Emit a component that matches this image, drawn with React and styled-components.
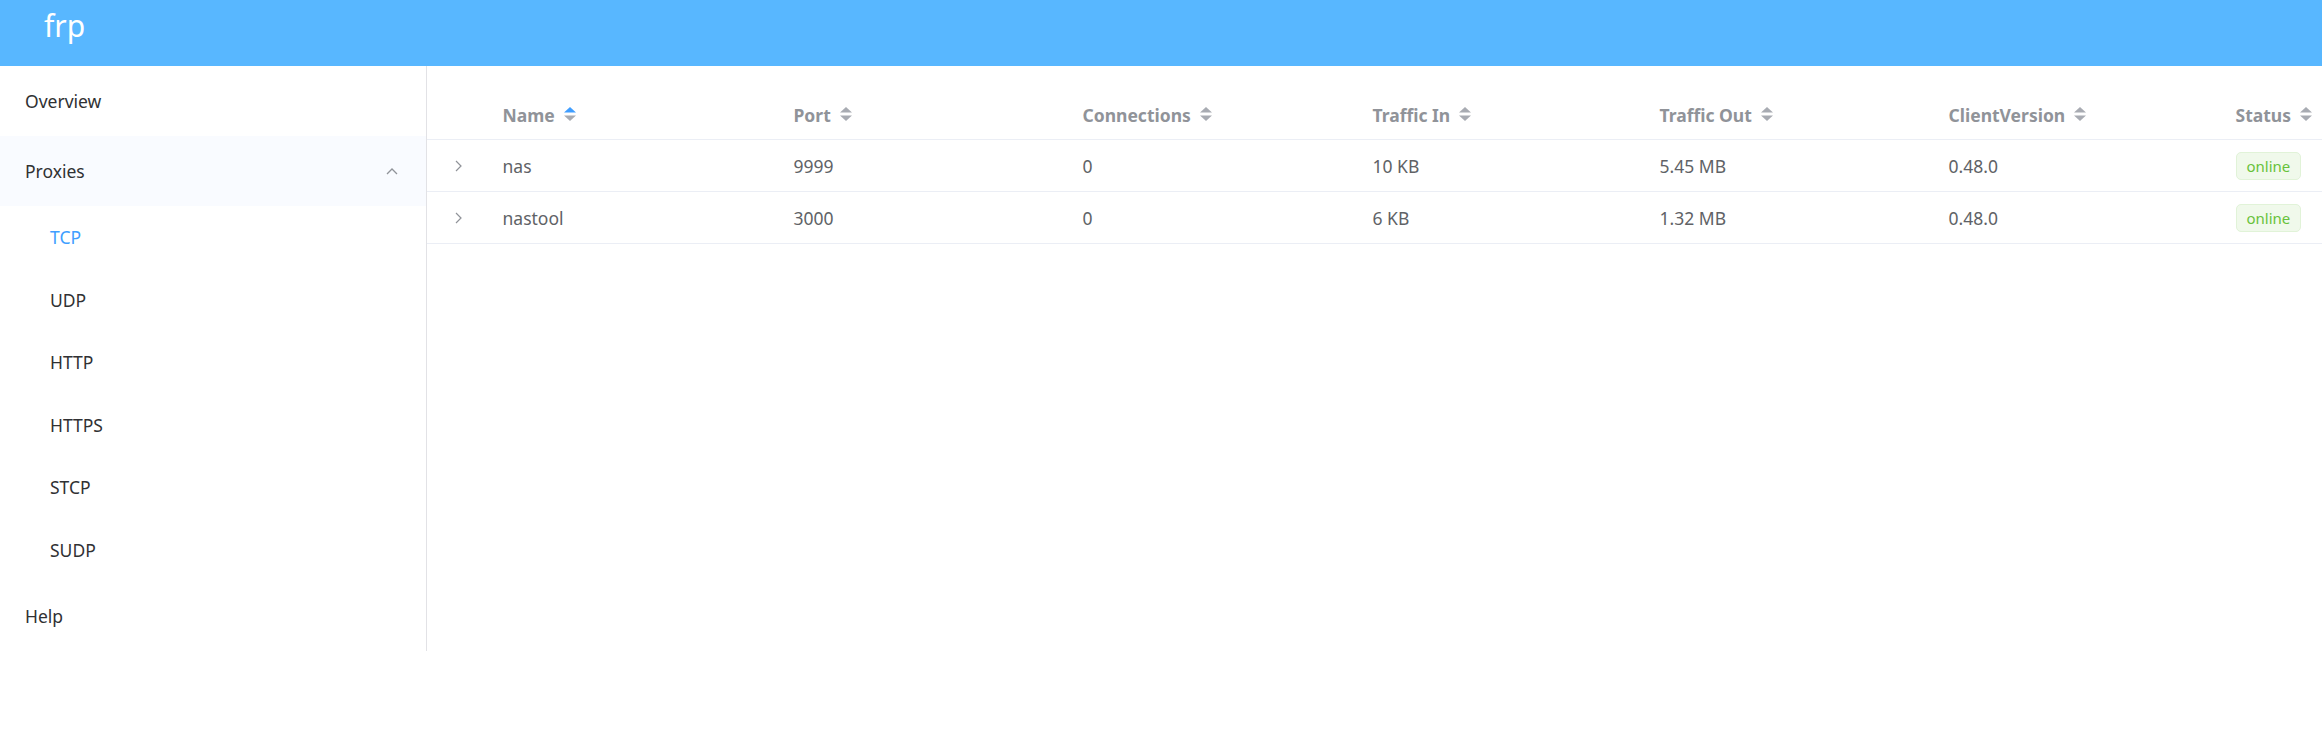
import React from "react";
import styled, { createGlobalStyle } from "styled-components";

const GlobalStyle = createGlobalStyle`
  html, body {
    margin: 0;
    padding: 0;
    background: #fff;
    font-family: "Noto Sans", "Open Sans", "Liberation Sans", sans-serif;
  }
  * { box-sizing: border-box; }
`;

const Header = styled.header`
  height: 66px;
  background: #58b7ff;
  display: flex;
  align-items: flex-start;
  padding: 5px 0 0 44px;
`;

const Brand = styled.a`
  color: #fff;
  font-size: 30px;
  line-height: 41px;
  text-decoration: none;
`;

const Body = styled.div`
  display: flex;
  align-items: flex-start;
`;

const Sidebar = styled.nav`
  width: 427px;
  flex-shrink: 0;
  border-right: 1px solid #e2e2e6;
`;

const MenuItem = styled.div`
  height: ${(p) => (p.$sub ? "62.5px" : "70px")};
  display: flex;
  align-items: center;
  justify-content: space-between;
  padding: 0 28px 0 ${(p) => (p.$sub ? "50px" : "25px")};
  font-size: 17.5px;
  color: ${(p) => (p.$active ? "#409eff" : "#303133")};
  background: ${(p) => (p.$open ? "#f9fbff" : "transparent")};
`;

const Main = styled.main`
  flex: 1;
  overflow: hidden;
  padding-top: 24px;
`;

const Row = styled.div`
  display: grid;
  grid-template-columns: 63px 291px 289px 290px 287px 289px 287px 289px;
  height: ${(p) => (p.$head ? "50px" : "52px")};
  align-items: center;
  border-bottom: 1px solid #ebeef5;
  width: max-content;
  min-width: 100%;
`;

const HeadCell = styled.div`
  padding: 0 12.5px;
  font-size: 17.5px;
  font-weight: 700;
  color: #909399;
  display: flex;
  align-items: center;
  white-space: nowrap;
`;

const Cell = styled.div`
  padding: 0 12.5px;
  font-size: 17.5px;
  color: #606266;
  white-space: nowrap;
`;

const ExpandCell = styled.div`
  display: flex;
  justify-content: center;
  align-items: center;
`;

const Caret = styled.svg`
  margin-left: 9px;
  flex-shrink: 0;
`;

const Tag = styled.span`
  display: inline-flex;
  align-items: center;
  height: 28px;
  padding: 0 10px;
  border: 1px solid #e1f3d8;
  background: #f0f9eb;
  color: #67c23a;
  border-radius: 5px;
  font-size: 15px;
`;

const SortCaret = ({ asc }) => (
  <Caret width="12" height="15" viewBox="0 0 12 15">
    <polygon points="6,0 12,5.5 0,5.5" fill={asc ? "#409eff" : "#a8abb2"} />
    <polygon points="0,8.5 12,8.5 6,14" fill="#a8abb2" />
  </Caret>
);

const ExpandIcon = () => (
  <svg width="7" height="12" viewBox="0 0 7 12">
    <polyline points="1,1 6,6 1,11" fill="none" stroke="#909399" strokeWidth="1.2" />
  </svg>
);

const ChevronUp = () => (
  <svg width="12" height="7" viewBox="0 0 12 7">
    <polyline points="1,6 6,1 11,6" fill="none" stroke="#909399" strokeWidth="1.3" />
  </svg>
);

const columns = ["Name", "Port", "Connections", "Traffic In", "Traffic Out", "ClientVersion", "Status"];

const proxies = [
  { name: "nas", port: 9999, conns: 0, in: "10 KB", out: "5.45 MB", version: "0.48.0", status: "online" },
  { name: "nastool", port: 3000, conns: 0, in: "6 KB", out: "1.32 MB", version: "0.48.0", status: "online" },
];

const subItems = ["TCP", "UDP", "HTTP", "HTTPS", "STCP", "SUDP"];

const App = () => {
  return (
    <>
      <GlobalStyle />
      <Header>
        <Brand>frp</Brand>
      </Header>
      <Body>
        <Sidebar>
          <MenuItem>Overview</MenuItem>
          <MenuItem $open>
            Proxies
            <ChevronUp />
          </MenuItem>
          {subItems.map((s) => (
            <MenuItem key={s} $sub $active={s === "TCP"}>
              {s}
            </MenuItem>
          ))}
          <MenuItem>Help</MenuItem>
        </Sidebar>
        <Main>
          <Row $head>
            <HeadCell />
            {columns.map((c) => (
              <HeadCell key={c}>
                {c}
                <SortCaret asc={c === "Name"} />
              </HeadCell>
            ))}
          </Row>
          {proxies.map((p) => (
            <Row key={p.name}>
              <ExpandCell>
                <ExpandIcon />
              </ExpandCell>
              <Cell>{p.name}</Cell>
              <Cell>{p.port}</Cell>
              <Cell>{p.conns}</Cell>
              <Cell>{p.in}</Cell>
              <Cell>{p.out}</Cell>
              <Cell>{p.version}</Cell>
              <Cell>
                <Tag>{p.status}</Tag>
              </Cell>
            </Row>
          ))}
        </Main>
      </Body>
    </>
  );
};

export default App;
